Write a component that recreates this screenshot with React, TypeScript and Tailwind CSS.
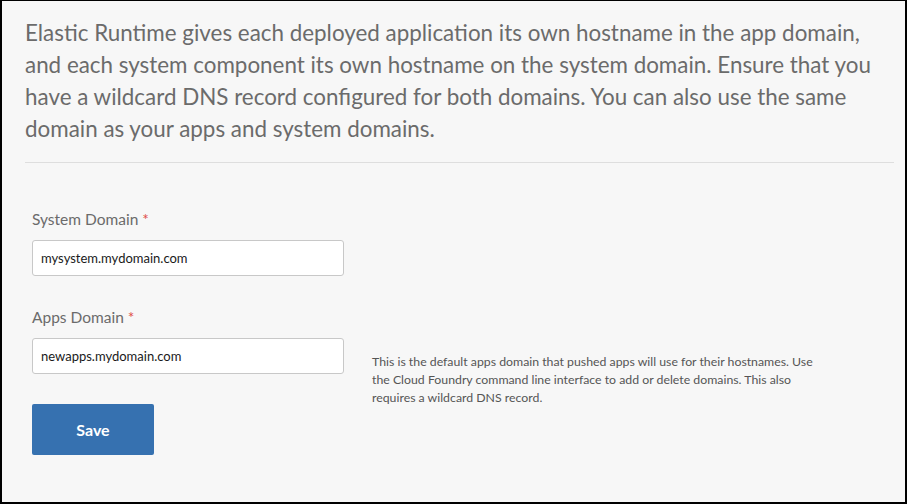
import React from "react";

const font = { fontFamily: '"Source Sans Pro", Lato, "Open Sans", sans-serif' };

function Field({ label, value }: { label: string; value: string }) {
  return (
    <div className="flex flex-col">
      <label className="text-[15.5px] leading-5 text-[#6b6b6b]">
        {label} <span className="text-[#e0504a]">*</span>
      </label>
      <input
        readOnly
        value={value}
        className="mt-[11px] h-[36px] w-[312px] rounded-[3px] border border-[#c8c8c8] bg-white px-2 text-[13px] text-[#1a1a1a] outline-none"
        style={font}
      />
    </div>
  );
}

export default function App() {
  return (
    <div
      className="h-[504px] w-[907px] border-2 border-t border-black bg-[#f7f7f7] text-[#666]"
      style={font}
    >
      <div className="pl-[23px] pr-[11px] pt-[16px]">
        <p className="whitespace-nowrap pb-[17px] text-[22.4px] leading-[32px] text-[#6b6b6b]">
          Elastic Runtime gives each deployed application its own hostname in the app domain,
          <br />
          and each system component its own hostname on the system domain. Ensure that you
          <br />
          have a wildcard DNS record configured for both domains. You can also use the same
          <br />
          domain as your apps and system domains.
        </p>
        <div className="h-px bg-[#dedede]" />
      </div>

      <div className="flex flex-col px-[30px] pt-[46px]">
        <Field label="System Domain" value="mysystem.mydomain.com" />
        <div className="mt-[31px] flex items-end gap-[28px]">
          <Field label="Apps Domain" value="newapps.mydomain.com" />
          <p className="mb-[-33px] whitespace-nowrap text-[12.3px] leading-[18px] text-[#555]">
            This is the default apps domain that pushed apps will use for their hostnames. Use
            <br />
            the Cloud Foundry command line interface to add or delete domains. This also
            <br />
            requires a wildcard DNS record.
          </p>
        </div>
        <button className="mt-[30px] h-[51px] w-[122px] rounded-[2px] bg-[#3671b0] text-[16px] font-bold text-white">
          Save
        </button>
      </div>
    </div>
  );
}
